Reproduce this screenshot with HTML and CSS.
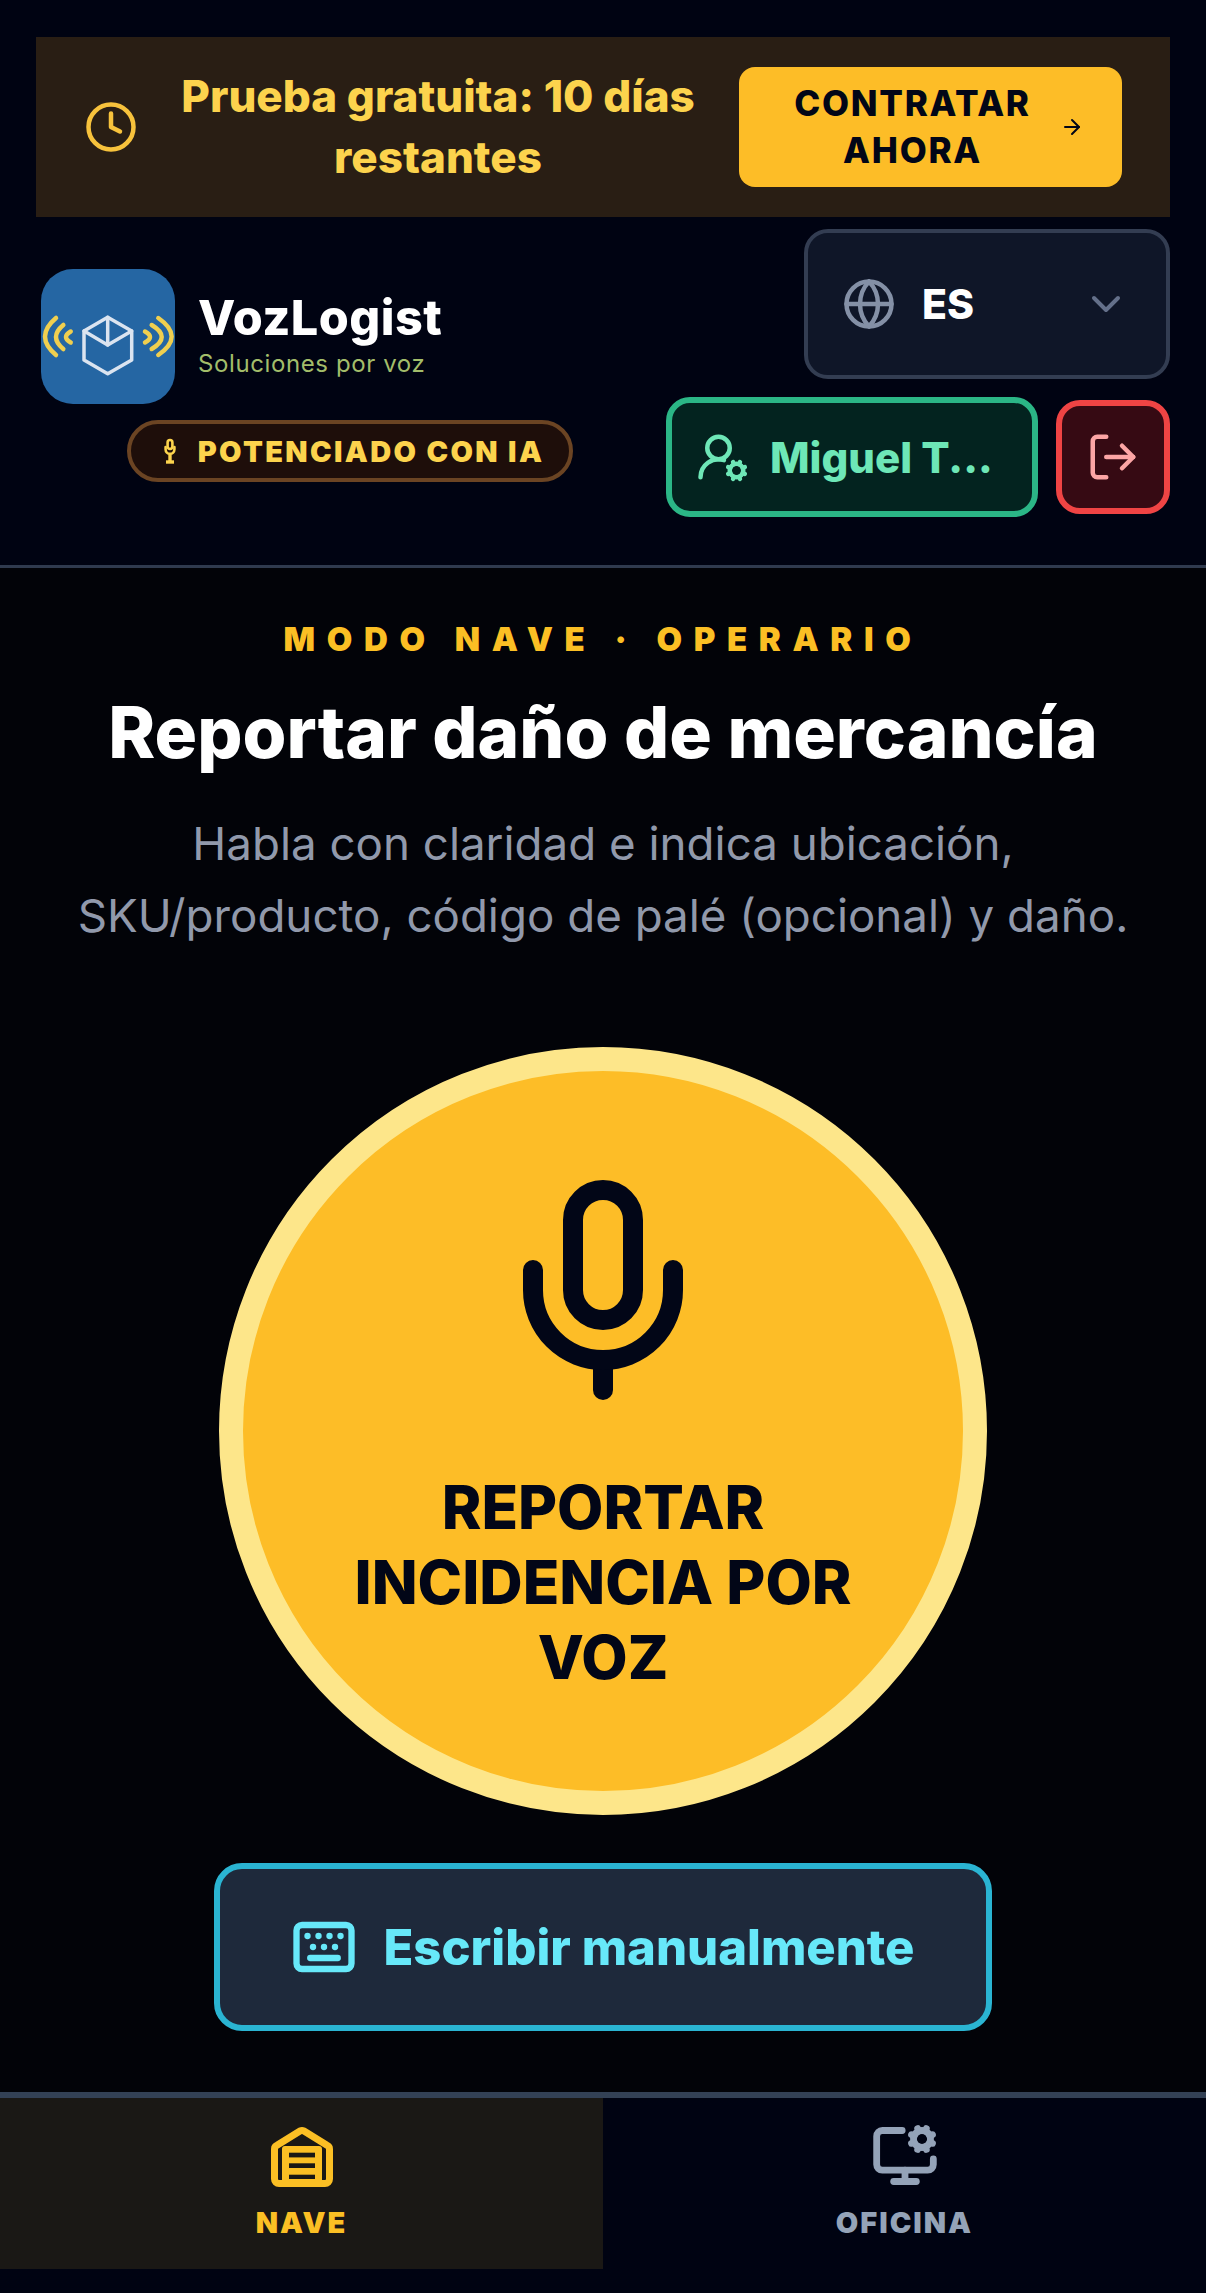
FILE: index.html
```html
<!DOCTYPE html>
<html lang="es">
<head>
  <meta charset="UTF-8">
  <title>VozLogist</title>
  <link rel="stylesheet" href="styles.css">
</head>

<body>
  <div class="app">

    <header class="top">
      <div class="trial">
        <svg class="trial-clock" viewBox="0 0 24 24"><circle cx="12" cy="12" r="10"/><path d="M12 6v6l4 2"/></svg>
        <p class="trial-text">Prueba gratuita: 10 días restantes</p>
        <button class="trial-btn">
          <span>Contratar ahora</span>
          <svg viewBox="0 0 24 24"><path d="M5 12h14"/><path d="m12 5 7 7-7 7"/></svg>
        </button>
      </div>

      <div class="bar">
        <div class="brand">
          <div class="brand-row">
            <svg class="logo" viewBox="0 0 134 135">
              <rect width="134" height="135" rx="32" fill="#2566a3"/>
              <g class="logo-waves">
                <path d="M15 49Q-7 67.5 15 86"/>
                <path d="M22.3 56Q7.7 68 22.3 80"/>
                <path d="M29.7 62.5Q20.3 68 29.7 73.5"/>
                <path d="M117.3 49Q144 67.5 117.3 86"/>
                <path d="M110.7 56Q130.7 68 110.7 80"/>
                <path d="M104 62.5Q114 68 104 73.5"/>
              </g>
              <g class="logo-box">
                <path d="M66.7 48.3 90.7 62V91L66.7 104.7 43 91V62Z"/>
                <path d="M43 62 66.7 76 90.7 62"/>
                <path d="M66.7 48.3V76"/>
              </g>
            </svg>
            <div>
              <div class="brand-name">VozLogist</div>
              <div class="brand-sub">Soluciones por voz</div>
            </div>
          </div>
          <div class="badge">
            <svg viewBox="0 0 12 26"><rect x="3.6" y="2" width="4.8" height="9" rx="2.4"/><path d="M1.6 9v2.5a4.4 4.4 0 0 0 8.8 0V9"/><path class="badge-stem" d="M6 17v6"/><path class="badge-stem" d="M2 24h8"/></svg>
            <span>Potenciado con IA</span>
          </div>
        </div>

        <div class="controls">
          <div class="lang">
            <svg class="lang-globe" viewBox="0 0 24 24"><circle cx="12" cy="12" r="10"/><path d="M12 2a14.5 14.5 0 0 0 0 20 14.5 14.5 0 0 0 0-20"/><path d="M2 12h20"/></svg>
            <span class="lang-code">ES</span>
            <svg class="lang-arrow" viewBox="0 0 24 24"><path d="m6 9 6 6 6-6"/></svg>
          </div>
          <div class="account">
            <button class="user-btn">
              <svg viewBox="0 0 24 24"><path d="m14.305 19.53.923-.382"/><path d="m15.228 16.852-.923-.383"/><path d="m16.852 15.228-.383-.923"/><path d="m16.852 20.772-.383.924"/><path d="m19.148 15.228.383-.923"/><path d="m19.53 21.696-.382-.924"/><path d="M2 21a8 8 0 0 1 10.434-7.62"/><path d="m20.772 16.852.924-.383"/><path d="m20.772 19.148.924.383"/><circle cx="10" cy="8" r="5"/><circle cx="18" cy="18" r="3"/></svg>
              <span>Miguel T...</span>
            </button>
            <button class="logout-btn">
              <svg viewBox="0 0 24 24"><path d="m16 17 5-5-5-5"/><path d="M21 12H9"/><path d="M9 21H5a2 2 0 0 1-2-2V5a2 2 0 0 1 2-2h4"/></svg>
            </button>
          </div>
        </div>
      </div>
    </header>

    <main class="content">
      <div class="mode">Modo nave · Operario</div>
      <h1>Reportar daño de mercancía</h1>
      <p class="hint">Habla con claridad e indica ubicación,<br>SKU/producto, código de palé (opcional) y daño.</p>

      <button class="talk">
        <svg viewBox="0 0 24 24"><path d="M12 19v3"/><path d="M19 10v2a7 7 0 0 1-14 0v-2"/><rect x="9" y="2" width="6" height="13" rx="3"/></svg>
        <span>Reportar incidencia por voz</span>
      </button>

      <button class="manual">
        <svg viewBox="0 0 24 24"><path d="M10 8h.01"/><path d="M12 12h.01"/><path d="M14 8h.01"/><path d="M16 12h.01"/><path d="M18 8h.01"/><path d="M6 8h.01"/><path d="M7 16h10"/><path d="M8 12h.01"/><rect x="2" y="4" width="20" height="16" rx="2"/></svg>
        <span>Escribir manualmente</span>
      </button>
    </main>

    <nav class="tabs">
      <a class="tab active">
        <svg class="tab-nave" viewBox="0 0 62 60">
          <path d="M3.5 22V52a4.5 4.5 0 0 0 4.5 4.5H54a4.5 4.5 0 0 0 4.5-4.5V22a4 4 0 0 0-2.5-3.7L33 4a5 5 0 0 0-4 0L6 18.3A4 4 0 0 0 3.5 22Z"/>
          <rect class="door" x="11" y="19" width="40" height="40" rx="3"/>
          <rect class="slot" x="18" y="25.7" width="26" height="4.7"/>
          <rect class="slot" x="18" y="36.3" width="26" height="4.7"/>
          <rect class="slot" x="18" y="47.7" width="26" height="4.3"/>
        </svg>
        <span>Nave</span>
      </a>
      <a class="tab">
        <svg viewBox="0 0 24 24"><path d="M12 17v4"/><path d="m14.305 7.53.923-.382"/><path d="m15.228 4.852-.923-.383"/><path d="m16.852 3.228-.383-.924"/><path d="m16.852 8.772-.383.924"/><path d="m19.148 3.228.383-.924"/><path d="m19.53 9.696-.382-.924"/><path d="m20.772 4.852.924-.383"/><path d="m20.772 7.148.924.383"/><path d="M22 13v2a2 2 0 0 1-2 2H4a2 2 0 0 1-2-2V5a2 2 0 0 1 2-2h7"/><path d="M8 21h8"/><circle cx="18" cy="6" r="3"/></svg>
        <span>Oficina</span>
      </a>
    </nav>

  </div>
</body>
</html>
```

FILE: styles.css
```css
* {
  box-sizing: border-box;
}
html, body {
  margin: 0;
  background: #000312;
}
body {
  font-family: Inter, 'Noto Sans', sans-serif;
  color: #fff;
}
button {
  font-family: inherit;
  cursor: pointer;
}
svg {
  display: block;
  flex: none;
  fill: none;
  stroke: currentColor;
  stroke-width: 2;
  stroke-linecap: round;
  stroke-linejoin: round;
}
.app {
  display: flex;
  flex-direction: column;
  height: 2293px;
}

.top {
  padding: 37px 36px 0;
  height: 568px;
  border-bottom: 3px solid #2f3a4e;
  flex: none;
}
.trial {
  display: flex;
  align-items: center;
  height: 180px;
  padding: 0 48px 0 48px;
  background: #291e14;
}
.trial-clock {
  width: 54px;
  height: 54px;
  color: #f7c23c;
}
.trial-text {
  width: 540px;
  margin: 0 0 0 30px;
  font-size: 44px;
  font-weight: 800;
  line-height: 61px;
  text-align: center;
  color: #fcd34d;
}
.trial-btn {
  display: flex;
  align-items: center;
  margin-left: auto;
  width: 383px;
  height: 120px;
  padding: 0 38px 0 26px;
  border: none;
  border-radius: 16px;
  background: #fdbd27;
  color: #020617;
}
.trial-btn span {
  flex: 1;
  padding: 0 16px;
  font-size: 35px;
  font-weight: 800;
  line-height: 47px;
  letter-spacing: 1.7px;
  text-transform: uppercase;
  text-align: center;
}
.trial-btn svg {
  width: 24px;
  height: 24px;
}

.bar {
  display: flex;
  align-items: center;
  gap: 2px;
  margin-top: 12px;
}
.brand {
  flex: 1;
  display: flex;
  flex-direction: column;
  align-items: center;
  padding-top: 5px;
}
.brand-row {
  align-self: flex-start;
  display: flex;
  align-items: center;
  gap: 23px;
  margin-left: 5px;
}
.logo {
  width: 134px;
  height: 135px;
  stroke: none;
}
.logo-waves {
  stroke: #f0cf4f;
  stroke-width: 4.5;
}
.logo-box {
  stroke: #dbe4f0;
  stroke-width: 3.5;
}
.brand-name {
  margin-top: -4px;
  font-size: 48.5px;
  font-weight: 800;
  line-height: 56px;
  letter-spacing: 0.5px;
}
.brand-sub {
  margin-top: 2px;
  font-size: 24px;
  line-height: 32px;
  letter-spacing: 0.6px;
  color: #a3bd6a;
}
.badge {
  display: flex;
  align-items: center;
  gap: 22px;
  height: 62px;
  margin-top: 16px;
  padding: 0 25px 0 33px;
  border: 4px solid #6b4423;
  border-radius: 31px;
  background: #1e0e0a;
  color: #fcd34d;
  font-size: 29px;
  font-weight: 900;
  letter-spacing: 2.35px;
  text-transform: uppercase;
}
.badge svg {
  width: 12px;
  height: 26px;
  stroke-width: 2.6;
}
.badge-stem {
  stroke-width: 3.4;
  stroke-linecap: butt;
}

.controls {
  display: flex;
  flex-direction: column;
  align-items: flex-end;
  gap: 18px;
}
.lang {
  display: flex;
  align-items: center;
  width: 366px;
  height: 150px;
  padding: 0 44px 0 34px;
  border: 4px solid #333d52;
  border-radius: 24px;
  background: #0f1628;
}
.lang-globe {
  width: 54px;
  height: 54px;
  color: #8490a6;
}
.lang-code {
  margin-left: 26px;
  font-size: 41px;
  font-weight: 800;
}
.lang-arrow {
  margin-left: auto;
  width: 48px;
  height: 48px;
  margin-right: -8px;
  color: #64708a;
}
.account {
  display: flex;
  align-items: center;
  gap: 18px;
}
.user-btn {
  display: flex;
  align-items: center;
  gap: 20px;
  width: 372px;
  height: 120px;
  padding: 0 20px 0 24px;
  border: 6px solid #2bb686;
  border-radius: 24px;
  background: #03231f;
  color: #6ee7b7;
  font-size: 42px;
  font-weight: 800;
}
.user-btn svg {
  width: 54px;
  height: 54px;
}
.logout-btn {
  display: flex;
  align-items: center;
  justify-content: center;
  width: 114px;
  height: 114px;
  padding: 0;
  border: 6px solid #ef4444;
  border-radius: 24px;
  background: #360a13;
  color: #fca5a5;
}
.logout-btn svg {
  width: 54px;
  height: 54px;
}

.content {
  flex: 1;
  display: flex;
  flex-direction: column;
  align-items: center;
  background: #020308;
}
.mode {
  margin-top: 51px;
  font-size: 33px;
  font-weight: 900;
  line-height: 40px;
  letter-spacing: 11.6px;
  text-transform: uppercase;
  color: #fbbf24;
}
h1 {
  margin: 31px 0 0;
  font-size: 71px;
  font-weight: 800;
  line-height: 84px;
}
.hint {
  margin: 34px 0 0;
  font-size: 45.7px;
  line-height: 72px;
  text-align: center;
  color: #9199ab;
}
.talk {
  display: flex;
  flex-direction: column;
  align-items: center;
  width: 768px;
  height: 768px;
  margin-top: 95px;
  padding: 99px 70px 0;
  border: 24px solid #fde68a;
  border-radius: 50%;
  background: #fdbd27;
  color: #020617;
}
.talk svg {
  width: 240px;
  height: 240px;
}
.talk span {
  margin-top: 60px;
  font-size: 60px;
  font-weight: 800;
  line-height: 75px;
  text-transform: uppercase;
}
.manual {
  display: flex;
  align-items: center;
  justify-content: center;
  gap: 26px;
  width: 778px;
  height: 168px;
  margin-top: 48px;
  border: 6px solid #2ab4d2;
  border-radius: 28px;
  background: #1e293b;
  color: #67e8f9;
  font-size: 49px;
  font-weight: 800;
}
.manual svg {
  width: 66px;
  height: 66px;
  stroke-width: 2.3;
}

.tabs {
  flex: none;
  display: flex;
  height: 201px;
  border-top: 6px solid #334155;
  background: #000312;
}
.tab {
  flex: 1;
  height: 171px;
  display: flex;
  flex-direction: column;
  align-items: center;
  padding-top: 24px;
  color: #94a3b8;
  font-size: 29px;
  font-weight: 900;
  letter-spacing: 2px;
  text-transform: uppercase;
}
.tab svg {
  width: 68px;
  height: 68px;
  stroke-width: 2.4;
}
.tab span {
  margin-top: 15px;
}
.tab.active {
  background: #1a1815;
  color: #fbbf24;
}
.tab svg.tab-nave {
  width: 62px;
  height: 60px;
  margin-top: 5px;
  margin-bottom: 3px;
  stroke-width: 7;
}
.door {
  fill: currentColor;
  stroke: none;
}
.slot {
  fill: #1a1815;
  stroke: none;
}
```
